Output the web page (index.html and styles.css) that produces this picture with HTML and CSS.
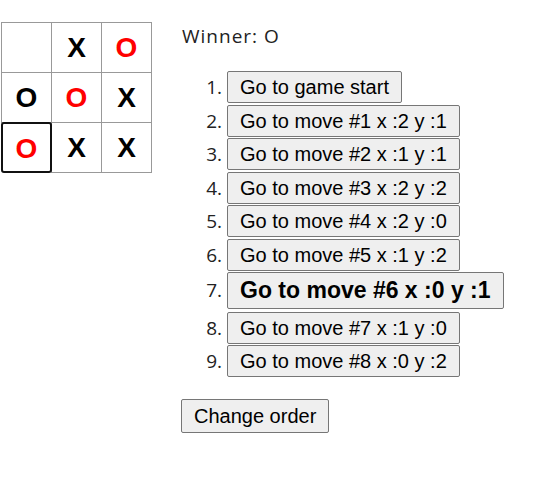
FILE: index.html
```html
<!DOCTYPE html>
<html>
<head>
<meta charset="utf-8">
<link rel="stylesheet" href="styles.css">
</head>
<body>
<div class="game">
  <div class="board">
    <div class="row">
      <button class="square"></button>
      <button class="square">X</button>
      <button class="square red">O</button>
    </div>
    <div class="row">
      <button class="square">O</button>
      <button class="square red">O</button>
      <button class="square">X</button>
    </div>
    <div class="row">
      <button class="square red focus">O</button>
      <button class="square">X</button>
      <button class="square">X</button>
    </div>
  </div>
  <div class="info">
    <div class="status">Winner: O</div>
    <ol class="moves">
      <li><button class="move">Go to game start</button></li>
      <li><button class="move">Go to move #1 x :2 y :1</button></li>
      <li><button class="move">Go to move #2 x :1 y :1</button></li>
      <li><button class="move">Go to move #3 x :2 y :2</button></li>
      <li><button class="move">Go to move #4 x :2 y :0</button></li>
      <li><button class="move">Go to move #5 x :1 y :2</button></li>
      <li class="cur"><button class="move current">Go to move #6 x :0 y :1</button></li>
      <li><button class="move">Go to move #7 x :1 y :0</button></li>
      <li><button class="move">Go to move #8 x :0 y :2</button></li>
    </ol>
    <button class="move order">Change order</button>
  </div>
</div>
</body>
</html>
```
FILE: styles.css
```css
html, body {
  margin: 0;
  padding: 0;
  background: #fff;
}
body {
  font-family: "Open Sans", "Liberation Sans", sans-serif;
  font-size: 19px;
  color: #222;
}
.game {
  display: flex;
  align-items: flex-start;
}
.board {
  margin: 22px 0 0 1px;
  display: flex;
  flex-direction: column;
}
.row {
  display: flex;
}
.square {
  box-sizing: border-box;
  width: 51px;
  height: 51px;
  margin: -1px -1px 0 0;
  padding: 0;
  background: #fff;
  border: 1px solid #999;
  font-family: "Liberation Sans", Arial, sans-serif;
  font-weight: bold;
  font-size: 28px;
  line-height: 49px;
  text-align: center;
  color: #000;
}
.row:first-child .square {
  margin-top: 0;
}
.square.red {
  color: #f00;
}
.square.focus {
  border: 2px solid #111;
  border-radius: 3px;
  position: relative;
}
.info {
  margin-left: 30px;
  margin-top: 24px;
}
.status {
  line-height: 24px;
  margin-left: 1px;
  letter-spacing: 1px;
}
.moves {
  margin: 23px 0 0 0;
  padding-left: 46px;
}
.moves li {
  margin-bottom: 1.5px;
  line-height: 32px;
  height: 32px;
}
.moves li.cur {
  height: 37px;
  line-height: 37px;
  margin-bottom: 2.5px;
}
.move {
  box-sizing: border-box;
  font-family: "Liberation Sans", Arial, sans-serif;
  font-size: 20px;
  line-height: 24px;
  height: 32px;
  padding: 3px 12px;
  background: #efefef;
  color: #000;
  border: 1px solid #767676;
  border-radius: 2px;
  vertical-align: top;
}
.move.current {
  font-weight: bold;
  font-size: 23px;
  line-height: 27px;
  height: 37px;
  padding: 4px 12px;
}
.order {
  margin-top: 20px;
  height: 34px;
  padding: 3px 12px;
}
```
